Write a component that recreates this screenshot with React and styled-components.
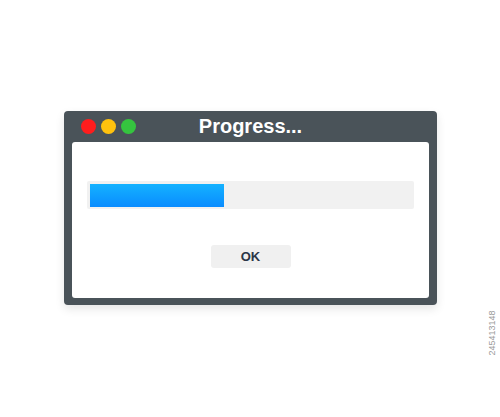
import React from "react";
import styled, { createGlobalStyle } from "styled-components";

const GlobalStyle = createGlobalStyle`
  html, body {
    margin: 0;
    padding: 0;
    background: #ffffff;
  }
  body {
    font-family: "Liberation Sans", Arial, sans-serif;
  }
`;

const Page = styled.div`
  position: relative;
  width: 500px;
  height: 417px;
  padding: 111px 0 0 64px;
  box-sizing: border-box;
  background: #ffffff;
  overflow: hidden;
`;

const Window = styled.div`
  width: 373px;
  height: 194px;
  box-sizing: border-box;
  background: #4a5359;
  border-radius: 4px;
  padding: 0 8px 7px 8px;
  display: flex;
  flex-direction: column;
  box-shadow: 0 4px 10px rgba(0, 0, 0, 0.1);
`;

const TitleBar = styled.div`
  position: relative;
  height: 31px;
  display: flex;
  align-items: center;
  justify-content: center;
`;

const Lights = styled.div`
  position: absolute;
  left: 9px;
  top: 8px;
  display: flex;
  gap: 5px;
`;

const Light = styled.span`
  width: 15px;
  height: 15px;
  border-radius: 50%;
  background: ${({ color }) => color};
`;

const Title = styled.h1`
  margin: 0 0 1px 0;
  font-size: 20px;
  font-weight: bold;
  color: #ffffff;
  letter-spacing: 0;
`;

const Panel = styled.div`
  flex: 1;
  background: #ffffff;
  border-radius: 3px;
  padding: 39px 15px 0 15px;
  display: flex;
  flex-direction: column;
  align-items: center;
`;

const Track = styled.div`
  align-self: stretch;
  height: 28px;
  box-sizing: border-box;
  padding: 3px 3px 2px 3px;
  background: #f1f1f1;
  border-radius: 2px;
`;

const Fill = styled.div`
  height: 100%;
  background: linear-gradient(to bottom, #14b2ff, #0a8cff);
`;

const Button = styled.button`
  margin-top: 36px;
  width: 80px;
  height: 23px;
  border: none;
  border-radius: 3px;
  background: #f0f0f0;
  color: #2b3647;
  font-family: "Liberation Sans", Arial, sans-serif;
  font-size: 13px;
  font-weight: bold;
  padding: 0;
`;

const StockId = styled.span`
  position: absolute;
  left: 492px;
  top: 333px;
  transform: translate(-50%, -50%) rotate(-90deg);
  font-size: 9px;
  color: #9a9a9a;
  white-space: nowrap;
`;

const lights = ["#ff1d1d", "#ffc20e", "#35c43f"];

export default function App() {
  const progress = 134 / 320;

  return (
    <>
      <GlobalStyle />
      <Page>
        <Window>
          <TitleBar>
            <Lights>
              {lights.map((c) => (
                <Light key={c} color={c} />
              ))}
            </Lights>
            <Title>Progress...</Title>
          </TitleBar>
          <Panel>
            <Track>
              <Fill style={{ width: `${progress * 100}%` }} />
            </Track>
            <Button>OK</Button>
          </Panel>
        </Window>
        <StockId>245413148</StockId>
      </Page>
    </>
  );
}
